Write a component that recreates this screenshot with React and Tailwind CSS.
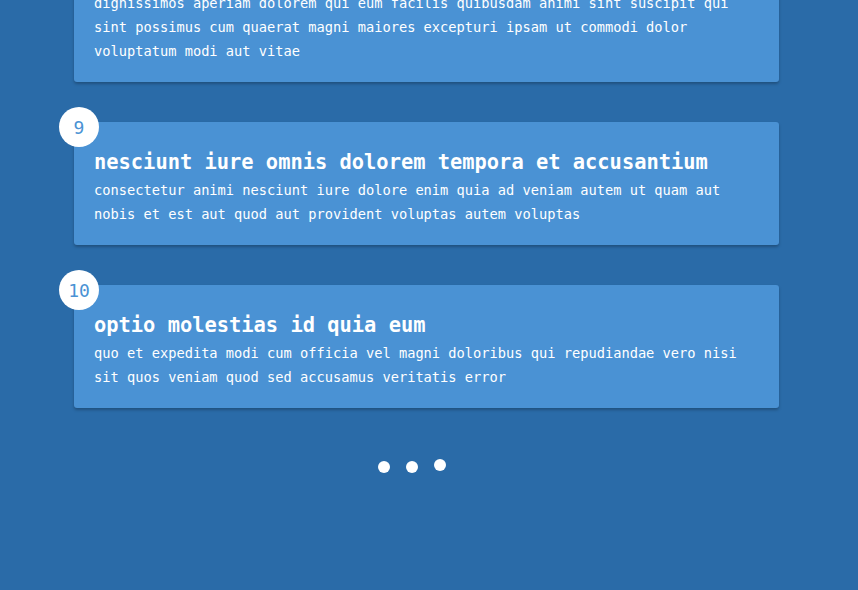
import React from "react";

const font = { fontFamily: '"DejaVu Sans Mono", "Liberation Mono", monospace' };

function Card({ n, title, body }) {
  return (
    <div className="relative rounded-[3px] bg-[#4a92d4] px-5 pt-6 pb-[19px] shadow-[0_2px_3px_rgba(0,0,0,0.25)]">
      <div className="absolute -left-[15px] -top-[15px] flex h-10 w-10 items-center justify-center rounded-full bg-white pt-[1px] text-[18px] text-[#4a92d4]">
        {n}
      </div>
      <h2 className="text-[20.4px] font-bold leading-[32px] text-white">{title}</h2>
      <p className="text-[13.7px] leading-[24px] text-white">{body}</p>
    </div>
  );
}

export default function App() {
  return (
    <div style={font} className="h-[590px] w-full overflow-hidden bg-[#2a6ba8]">
      <div className="mx-[74px] w-[705px]">
        <div className="-mt-[9px] rounded-[3px] bg-[#4a92d4] px-5 pb-[19px] shadow-[0_2px_3px_rgba(0,0,0,0.25)]">
          <p className="text-[13.7px] leading-[24px] text-white">
            dignissimos aperiam dolorem qui eum facilis quibusdam animi sint suscipit qui sint possimus cum quaerat magni maiores excepturi ipsam ut commodi dolor voluptatum modi aut vitae
          </p>
        </div>
        <div className="mt-10 flex flex-col gap-10">
          <Card
            n={9}
            title="nesciunt iure omnis dolorem tempora et accusantium"
            body="consectetur animi nesciunt iure dolore enim quia ad veniam autem ut quam aut nobis et est aut quod aut provident voluptas autem voluptas"
          />
          <Card
            n={10}
            title="optio molestias id quia eum"
            body="quo et expedita modi cum officia vel magni doloribus qui repudiandae vero nisi sit quos veniam quod sed accusamus veritatis error"
          />
        </div>
      </div>
      <div className="mt-[51px] flex items-start justify-center gap-4 pr-[34px]">
        <span className="mt-[2px] h-3 w-3 rounded-full bg-white" />
        <span className="mt-[2px] h-3 w-3 rounded-full bg-white" />
        <span className="h-3 w-3 rounded-full bg-white" />
      </div>
    </div>
  );
}
